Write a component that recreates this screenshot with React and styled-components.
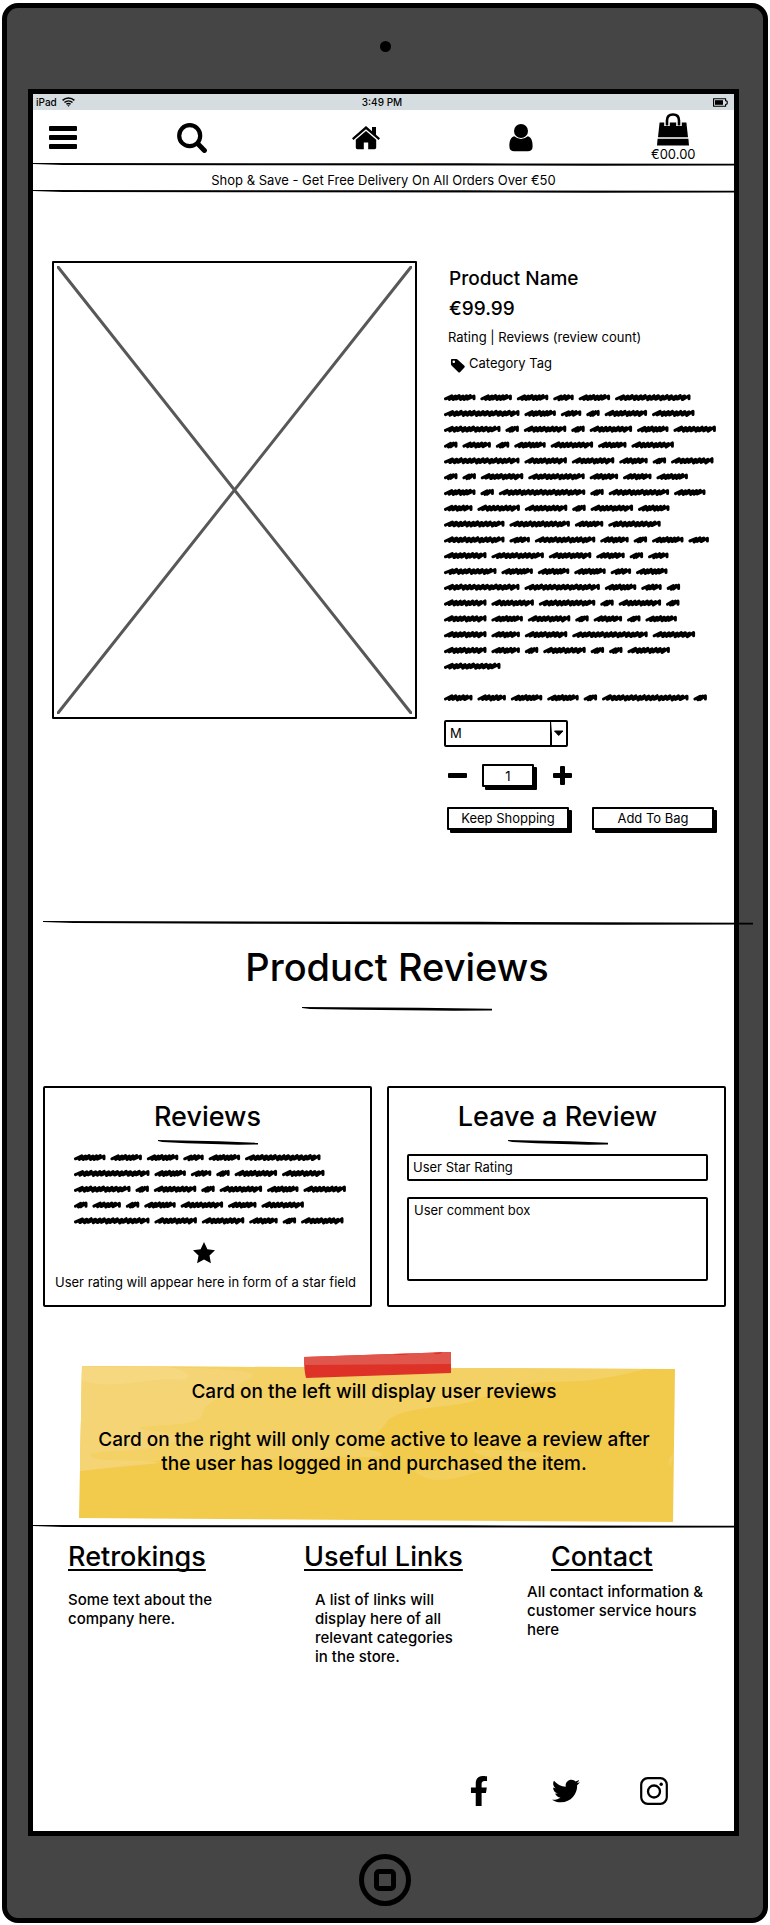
import React from "react";
import styled, { createGlobalStyle } from "styled-components";
import { FaFacebookF, FaTwitter } from "react-icons/fa";

const GlobalStyle = createGlobalStyle`
  *, *::before, *::after { box-sizing: border-box; }
  body { margin: 0; background: #fff; }
  body, button, input, select, textarea {
    font-family: Inter, "Liberation Sans", Arial, sans-serif;
    font-size: 13px;
    line-height: 16px;
    color: #000;
  }
  h1, h2, h3, p { margin: 0; font-weight: 400; }
  svg { display: block; }
`;

/* ---------- device ---------- */

const Device = styled.div`
  margin: 3px 2px 2px;
  padding: 0 24px 0 21px;
  background: #454545;
  border: 5px solid #000;
  border-radius: 16px;
`;

const TopBezel = styled.div`
  height: 81px;
  padding: 33px 0 0 3px;
  display: flex;
  justify-content: center;
`;

const Camera = styled.span`
  width: 11px;
  height: 11px;
  border-radius: 50%;
  background: #000;
`;

const Screen = styled.div`
  background: #fff;
  border: 5px solid #000;
`;

const BottomBezel = styled.div`
  height: 82px;
  padding: 18px 0 0 3px;
  display: flex;
  justify-content: center;
  align-items: flex-start;
`;

const HomeButton = styled.button`
  width: 52px;
  height: 52px;
  padding: 0;
  display: grid;
  place-items: center;
  background: none;
  border: 5px solid #000;
  border-radius: 50%;

  &::before {
    content: "";
    width: 22px;
    height: 22px;
    border: 5px solid #000;
    border-radius: 5px;
  }
`;

const StatusBar = styled.div`
  height: 16px;
  padding: 0 6px 0 3px;
  display: grid;
  grid-template-columns: 1fr auto 1fr;
  align-items: center;
  background: #d6dde1;
  font-size: 10px;
  font-weight: 500;
`;

const Carrier = styled.span`
  display: flex;
  align-items: center;
  gap: 5px;
`;

const BatterySlot = styled.span`
  justify-self: end;
`;

/* ---------- header ---------- */

const Nav = styled.nav`
  height: 53px;
  padding: 2px 0 0 16px;
  display: grid;
  grid-template-columns: 128fr 175fr 157fr 142fr 83fr;
  justify-items: start;
  align-items: center;
`;

const NavButton = styled.button`
  padding: 0;
  border: 0;
  background: none;
`;

const BagButton = styled(NavButton)`
  display: flex;
  flex-direction: column;
  align-items: center;
`;

const Promo = styled.p`
  height: 24px;
  padding-top: 2px;
  line-height: 24px;
  text-align: center;
`;

/* ---------- product ---------- */

const Product = styled.section`
  padding: 68px 18px 0 19px;
  display: grid;
  grid-template-columns: 365fr 272fr;
  gap: 27px;
  align-items: start;
`;

const ImageBox = styled.div`
  aspect-ratio: 365 / 458;
  padding: 3px;
  border: 2px solid #000;
  border-radius: 1px;

  svg { width: 100%; height: 100%; }
`;

const Info = styled.div`
  padding-top: 6px;
`;

const ProductLine = styled.div`
  margin-bottom: 6px;
  padding-left: 5px;
  font-size: 19px;
  font-weight: 500;
  line-height: 24px;
`;

const Rating = styled.p`
  padding: 2px 0 0 4px;
`;

const Tag = styled.p`
  margin: 10px 0 17px;
  padding-left: 7px;
  display: flex;
  gap: 4px;

  svg { margin-top: 4px; }
`;

const SelectBox = styled.div`
  position: relative;
  width: 124px;
  margin: 14px 0 17px;

  svg { position: absolute; top: 0; right: 0; pointer-events: none; }
`;

const Select = styled.select`
  appearance: none;
  width: 100%;
  height: 27px;
  padding: 0 4px 2px;
  background: #fff;
  border: 2px solid #000;
  border-radius: 2px;
`;

const Quantity = styled.div`
  display: flex;
  align-items: center;
  padding-left: 4px;
  margin-bottom: 20px;
`;

const QuantityInput = styled.input`
  width: 52px;
  height: 23px;
  margin: 0 19px 0 15px;
  padding: 0;
  text-align: center;
  border: 2px solid #000;
  border-radius: 1px;
  box-shadow: 3px 3px 0 #000;
`;

const Actions = styled.div`
  padding: 0 2px 0 3px;
  display: grid;
  grid-template-columns: 1fr 1fr;
  gap: 23px;
`;

const ActionButton = styled.button`
  height: 23px;
  padding: 0;
  line-height: 19px;
  white-space: nowrap;
  background: #fff;
  border: 2px solid #000;
  border-radius: 1px;
  box-shadow: 3px 3px 0 #000;
`;

/* ---------- reviews ---------- */

const ReviewRule = styled.div`
  margin: 91px -19px 0 10px;
`;

const SectionHeader = styled.header`
  padding-left: 27px;
`;

const SectionTitle = styled.h1`
  margin: 18px 0 16px;
  font-size: 38px;
  font-weight: 500;
  line-height: 48px;
  text-align: center;
`;

const Underline = styled.div`
  width: ${(p) => p.$width}px;
  margin: 0 auto;
`;

const Cards = styled.section`
  margin: 75px 8px 45px 10px;
  display: grid;
  grid-template-columns: 329fr 339fr;
  gap: 15px;
`;

const Card = styled.article`
  padding: 12px 16px 15px;
  border: 2px solid #000;
  border-radius: 2px;
`;

const FormCard = styled(Card)`
  padding: 12px 16px 24px 18px;
`;

const CardTitle = styled.h2`
  margin-bottom: 6px;
  font-size: 27px;
  font-weight: 500;
  line-height: 34px;
  text-align: center;
`;

const ReviewText = styled.div`
  margin-top: 5px;
  padding-left: 4px;
  display: flex;
  justify-content: center;
`;

const Star = styled.div`
  margin: 13px 0 10px;
  padding-right: 8px;
  display: flex;
  justify-content: center;
`;

const CardNote = styled.p`
  margin: 0 -8px;
  padding: 0 0 0 2px;
`;

const RatingInput = styled.input`
  display: block;
  width: 100%;
  height: 27px;
  margin: 9px 0 16px;
  padding: 0 4px 2px;
  border: 2px solid #000;
  border-radius: 2px;

  &::placeholder { color: #000; opacity: 1; }
`;

const CommentInput = styled.textarea`
  display: block;
  width: 100%;
  height: 84px;
  padding: 3px 5px;
  resize: none;
  border: 2px solid #000;
  border-radius: 2px;

  &::placeholder { color: #000; opacity: 1; }
`;

/* ---------- sticky note ---------- */

const Note = styled.aside`
  position: relative;
  margin: 0 59px 3px 46px;
  padding: 28px 14px 46px 8px;
  font-size: 19px;
  font-weight: 500;
  line-height: 24px;
  text-align: center;

  > svg { position: absolute; inset: 0; width: 100%; height: 100%; }
  > p { position: relative; font-weight: 500; }
  > p + p { margin-top: 24px; }
`;

/* ---------- footer ---------- */

const Footer = styled.footer`
  padding: 12px 0 25px;
`;

const Columns = styled.div`
  padding-left: 35px;
  display: grid;
  grid-template-columns: 236fr 223fr 207fr;
`;

const Column = styled.section`
  h2 {
    margin: 0 0 ${(p) => p.$gap || 16}px ${(p) => p.$titleIndent || 0}px;
    font-size: 27px;
    font-weight: 500;
    line-height: 34px;
    text-decoration: underline;
    text-decoration-thickness: 2px;
    text-decoration-skip-ink: none;
    text-underline-offset: 3px;
  }

  p {
    max-width: ${(p) => p.$measure}px;
    margin-left: ${(p) => p.$textIndent || 0}px;
    font-size: 15px;
    font-weight: 500;
    line-height: 19px;
  }
`;

const Social = styled.div`
  margin-top: 110px;
  padding-right: 66px;
  display: flex;
  justify-content: flex-end;
  gap: 60px;
`;

const SocialLink = styled.a`
  width: 28px;
  height: 30px;
  display: grid;
  place-items: center;
  color: #000;
`;

/* ---------- drawings ---------- */

const Rule = ({ height = 3, slope = 0 }) => (
  <svg width="100%" height={height} viewBox={`0 0 700 ${height}`} preserveAspectRatio="none" aria-hidden="true">
    <path
      d={`M0 .1 L430 ${0.3 + slope / 2} L700 ${0.8 + slope} L700 ${2.4 + slope} L560 ${2.7 + slope} L200 ${2.3 + slope / 2} L30 2 L0 1 Z`}
    />
  </svg>
);

const PRODUCT_COPY = [
  [31, 31, 31, 20, 31, 75],
  [75, 31, 20, 13, 42, 42],
  [56, 13, 42, 13, 42, 31, 42],
  [13, 28, 13, 31, 42, 28, 42],
  [75, 42, 42, 28, 13, 42],
  [13, 13, 42, 56, 28, 28, 31],
  [31, 13, 86, 13, 60, 31],
  [28, 42, 42, 13, 42, 31],
  [60, 60, 28, 52],
  [60, 20, 60, 28, 13, 31, 20],
  [42, 52, 42, 28, 13, 20],
  [52, 31, 31, 31, 20, 31],
  [75, 75, 31, 20, 13],
  [42, 42, 56, 13, 42, 13],
  [42, 31, 42, 13, 28, 13, 31],
  [42, 28, 42, 75, 42],
  [42, 28, 13, 42, 13, 13, 42],
  [56],
  [],
  [28, 28, 31, 31, 13, 86, 13],
];

function scribbleWord(x, y, width) {
  const start = x + 1.5;
  const end = x + width - 1.5;
  const strokes = Math.max(3, Math.round(width / 4.6));
  const step = (end - start - 2.6) / strokes;
  let d = `M${start.toFixed(1)} ${(y + 1.2).toFixed(1)}`;
  for (let i = 0; i < strokes; i += 1) {
    const wobble = Math.sin(i * 2.3 + width);
    const foot = start + step * (i + 1);
    d += ` L${(foot + 2.6).toFixed(1)} ${(y - 1.8 + wobble * 0.3).toFixed(1)}`;
    if (i < strokes - 1) {
      d += ` L${(foot + wobble * 0.5).toFixed(1)} ${(y + 1.8 + wobble * 0.3).toFixed(1)}`;
    }
  }
  return `${d} L${end.toFixed(1)} ${(y + 1.2).toFixed(1)}`;
}

function Scribble({ rows }) {
  const pitch = 15.8;
  const height = Math.round(16 + (rows.length - 1) * pitch);
  return (
    <svg width="272" height={height} viewBox={`0 0 272 ${height}`} role="img" aria-label="Placeholder text">
      {rows.map((row, r) => {
        let x = 0;
        return row.map((w, i) => {
          const d = scribbleWord(x, 7.6 + r * pitch, w + 0.5);
          x += w + 5.4;
          return <path key={`${r}-${i}`} d={d} fill="none" stroke="#000" strokeWidth="3" strokeLinecap="round" strokeLinejoin="round" />;
        });
      })}
    </svg>
  );
}

const WifiIcon = () => (
  <svg width="13" height="10" viewBox="0 0 13 10" fill="none" stroke="#000" strokeWidth="1.5">
    <path d="M.6 3.4C4 .1 9 .1 12.4 3.4M2.5 5.5c2.3-2.1 5.7-2.1 8 0M4.4 7.3c1.3-1.1 2.9-1.1 4.2 0" />
    <path d="M5.2 8.2 6.5 9.8 7.8 8.2Z" fill="#000" stroke="none" />
  </svg>
);

const BatteryIcon = () => (
  <svg width="15" height="9" viewBox="0 0 15 9">
    <path d="M.6.8H12.6V2.6L14.2 3.4V5.8L12.6 6.5V8.2H.6Z" fill="none" stroke="#000" strokeWidth="1.1" />
    <rect x="2" y="2.2" width="8" height="4.6" />
  </svg>
);

const MenuIcon = () => (
  <svg width="28" height="23" viewBox="0 0 28 23">
    <rect width="28" height="5" rx="1" />
    <rect y="9" width="28" height="5" rx="1" />
    <rect y="18" width="28" height="5" rx="1" />
  </svg>
);

const SearchIcon = () => (
  <svg width="30" height="30" viewBox="0 0 30 30" fill="none" stroke="#000">
    <circle cx="12.7" cy="12.7" r="10.5" strokeWidth="4.2" />
    <path d="M20.8 20.8 27.4 27.4" strokeWidth="5" strokeLinecap="round" />
  </svg>
);

const HomeIcon = () => (
  <svg width="28" height="24" viewBox="0 0 28 24">
    <path d="M14 0 20 5.3V1H24V8.8L28 12.3 26.6 14 14 3.2 1.4 14 0 12.3Z" />
    <path d="M14 5 24.2 13.7V21.5Q24.2 23.2 22.5 23.2H16.2V16.4H11.8V23.2H5.4Q3.8 23.2 3.8 21.5V13.7Z" />
  </svg>
);

const UserIcon = () => (
  <svg width="24" height="28" viewBox="0 0 24 28">
    <circle cx="12" cy="7" r="7" />
    <path d="M5.2 12.2Q12 17.8 18.8 12.2C22.4 13.1 23.7 17.2 23.6 22.4Q23.5 27.2 18.8 27.2H5.2Q.5 27.2.4 22.4C.3 17.2 1.6 13.1 5.2 12.2Z" />
  </svg>
);

const BagIcon = () => (
  <svg width="32" height="33" viewBox="0 0 32 33">
    <path d="M2.6 9.5H29.4L31 24.2H1Z" />
    <path d="M.6 25.8H31.4L32 32.5H0Z" />
    <path d="M10 13V7.5Q10 1.5 16 1.5T22 7.5V13" fill="none" stroke="#fff" strokeWidth="5.6" />
    <path d="M10 12.6V7.5Q10 1.5 16 1.5T22 7.5V12.6" fill="none" stroke="#000" strokeWidth="2.6" />
  </svg>
);

const TagIcon = () => (
  <svg width="14" height="14" viewBox="0 0 14 14">
    <path fillRule="evenodd" d="M0 .8Q0 0 .8 0H5.2Q6.1 0 6.8.7L13.4 6.8Q14.2 7.6 13.4 8.4L9 13.2Q8.2 14 7.4 13.2L.8 6.8Q0 6.1 0 5.2ZM2.8 1.4A1.3 1.3 0 1 0 2.8 4 1.3 1.3 0 1 0 2.8 1.4Z" />
  </svg>
);

const MinusIcon = () => (
  <svg width="19" height="19" viewBox="0 0 19 19"><rect y="7" width="19" height="5" rx="1" /></svg>
);

const PlusIcon = () => (
  <svg width="19" height="19" viewBox="0 0 19 19">
    <rect y="7" width="19" height="5" rx="1" />
    <rect x="7" width="5" height="19" rx="1" />
  </svg>
);

const StarIcon = () => (
  <svg width="22" height="22" viewBox="0 0 22 22">
    <path d="M11 0 14.4 7.2 22 8.2 16.5 13.5 17.9 21.2 11 17.5 4.1 21.2 5.5 13.5 0 8.2 7.6 7.2Z" />
  </svg>
);

const InstagramIcon = () => (
  <svg width="28" height="28" viewBox="0 0 28 28" fill="none" stroke="#000">
    <rect x="1.2" y="1.2" width="25.6" height="25.6" rx="6.5" strokeWidth="2.2" />
    <circle cx="14" cy="14.5" r="6" strokeWidth="2.3" />
    <circle cx="21.2" cy="7.2" r="1.7" fill="#000" stroke="none" />
  </svg>
);

const NotePaper = () => (
  <svg viewBox="0 0 596 170" preserveAspectRatio="none" aria-hidden="true">
    <path d="M3 14 596 17 594 170 0 166Z" fill="#f2ca4c" />
    <path d="M3 14 566 17C552 21 533 25 514 28 493 31 470 28 452 32 430 38 406 43 397 48 376 57 318 53 307 71 298 84 288 88 286 97 312 101 307 106 284 105 220 106 148 109 70 109L1 119Z" fill="#f3d165" />
    <path d="M3 14 120 16C170 19 189 20 161 31 157 46 130 43 124 60 124 73 98 72 62 75 57 81 105 77 97 89 68 102 35 96 12 102 6 112 67 106 81 111L1 119Z" fill="#f5d579" opacity=".8" />
    <path d="M3 15 83 14C110 18 112 23 107 28 66 24 35 40 3 28Z" fill="#f7db88" opacity=".6" />
    <path d="M394 98C425 97 452 99 477 103 445 108 398 108 394 98ZM333 116C352 125 391 109 413 116 391 121 351 140 333 116ZM595 101C589 104 588 113 592 114Z" fill="#f3d165" opacity=".7" />
    <path d="M225 5 372 0V21L227 26Q225 18 225 5Z" fill="#de3127" />
    <path d="M225 5 372 0V12L225 13Z" fill="#e0564c" />
    <path d="M312 2Q322 4 331 2ZM354 1Q359 4 364 0Z" fill="#de3127" />
  </svg>
);

export default function App() {
  return (
    <>
      <GlobalStyle />
      <Device>
        <TopBezel><Camera /></TopBezel>
        <Screen>
          <StatusBar>
            <Carrier>iPad <WifiIcon /></Carrier>
            <span>3:49 PM</span>
            <BatterySlot><BatteryIcon /></BatterySlot>
          </StatusBar>

          <Nav aria-label="Main">
            <NavButton aria-label="Menu"><MenuIcon /></NavButton>
            <NavButton aria-label="Search"><SearchIcon /></NavButton>
            <NavButton aria-label="Home"><HomeIcon /></NavButton>
            <NavButton aria-label="Account"><UserIcon /></NavButton>
            <BagButton><BagIcon />€00.00</BagButton>
          </Nav>
          <Rule />
          <Promo>Shop &amp; Save - Get Free Delivery On All Orders Over €50</Promo>
          <Rule />

          <main>
            <Product>
              <ImageBox>
                <svg viewBox="0 0 355 448" preserveAspectRatio="none" role="img" aria-label="Product image">
                  <path d="M1 1 354 447M354 1 1 447" stroke="#585858" strokeWidth="3" strokeLinecap="round" />
                </svg>
              </ImageBox>
              <Info>
                <ProductLine as="h2">Product Name</ProductLine>
                <ProductLine>€99.99</ProductLine>
                <Rating>Rating | Reviews (review count)</Rating>
                <Tag><TagIcon />Category Tag</Tag>
                <Scribble rows={PRODUCT_COPY} />
                <SelectBox>
                  <Select aria-label="Size" defaultValue="M">
                    <option>S</option>
                    <option>M</option>
                    <option>L</option>
                  </Select>
                  <svg width="18" height="27" viewBox="0 0 18 27">
                    <path d="M0 1 1 14V26" fill="none" stroke="#000" strokeWidth="2" />
                    <path d="M4.5 11H13L8.7 15.5Z" stroke="#000" strokeLinejoin="round" />
                  </svg>
                </SelectBox>
                <Quantity>
                  <NavButton aria-label="Decrease quantity"><MinusIcon /></NavButton>
                  <QuantityInput aria-label="Quantity" defaultValue="1" />
                  <NavButton aria-label="Increase quantity"><PlusIcon /></NavButton>
                </Quantity>
                <Actions>
                  <ActionButton>Keep Shopping</ActionButton>
                  <ActionButton>Add To Bag</ActionButton>
                </Actions>
              </Info>
            </Product>

            <ReviewRule><Rule height={4} slope={1} /></ReviewRule>
            <SectionHeader>
              <SectionTitle>Product Reviews</SectionTitle>
              <Underline $width={190}><Rule height={4} slope={1} /></Underline>
            </SectionHeader>

            <Cards>
              <Card>
                <CardTitle>Reviews</CardTitle>
                <Underline $width={100}><Rule height={5} slope={2} /></Underline>
                <ReviewText><Scribble rows={PRODUCT_COPY.slice(0, 5)} /></ReviewText>
                <Star><StarIcon /></Star>
                <CardNote>User rating will appear here in form of a star field</CardNote>
              </Card>
              <FormCard as="form">
                <CardTitle>Leave a Review</CardTitle>
                <Underline $width={100}><Rule height={5} slope={2} /></Underline>
                <RatingInput aria-label="User Star Rating" placeholder="User Star Rating" />
                <CommentInput aria-label="User comment box" placeholder="User comment box" />
              </FormCard>
            </Cards>

            <Note>
              <NotePaper />
              <p>Card on the left will display user reviews</p>
              <p>Card on the right will only come active to leave a review after the user has logged in and purchased the item.</p>
            </Note>
          </main>

          <Rule />
          <Footer>
            <Columns>
              <Column $measure={160}>
                <h2>Retrokings</h2>
                <p>Some text about the company here.</p>
              </Column>
              <Column $measure={145} $textIndent={11}>
                <h2>Useful Links</h2>
                <p>A list of links will display here of all relevant categories in the store.</p>
              </Column>
              <Column $measure={190} $titleIndent={24} $gap={8}>
                <h2>Contact</h2>
                <p>All contact information &amp; customer service hours here</p>
              </Column>
            </Columns>
            <Social>
              <SocialLink href="#facebook" aria-label="Facebook"><FaFacebookF size={30} /></SocialLink>
              <SocialLink href="#twitter" aria-label="Twitter"><FaTwitter size={28} /></SocialLink>
              <SocialLink href="#instagram" aria-label="Instagram"><InstagramIcon /></SocialLink>
            </Social>
          </Footer>
        </Screen>
        <BottomBezel><HomeButton aria-label="Home button" /></BottomBezel>
      </Device>
    </>
  );
}
